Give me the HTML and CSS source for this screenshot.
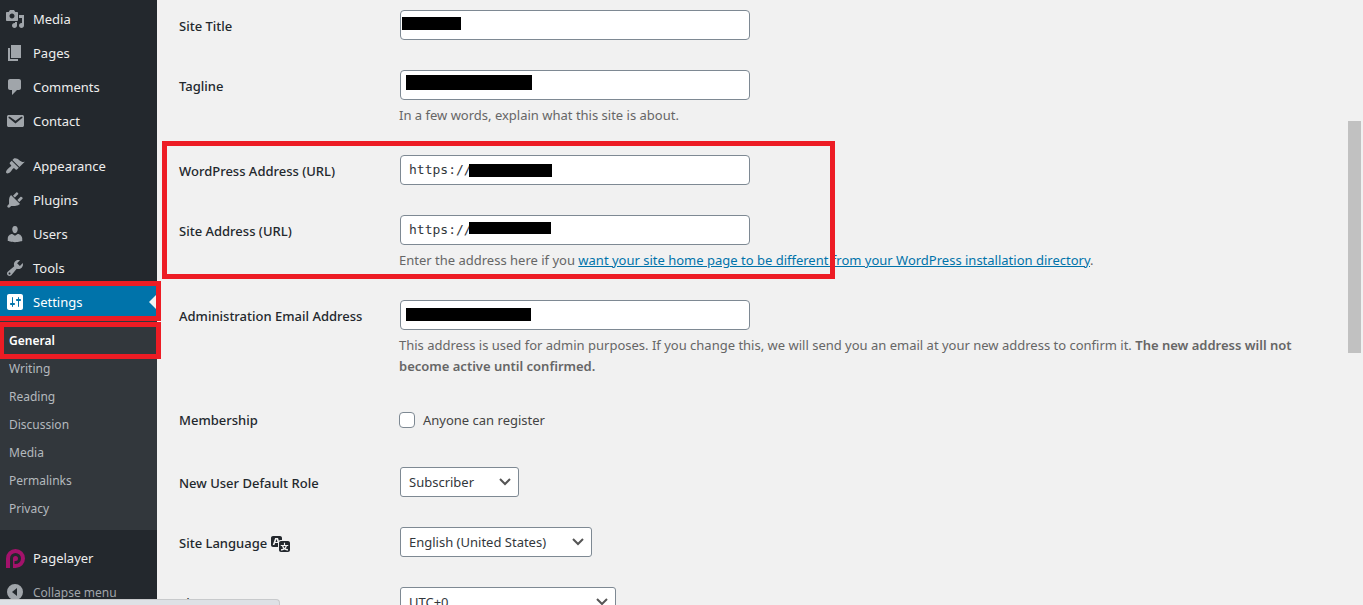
FILE: index.html
```html
<!DOCTYPE html>
<html lang="en">
<head>
    <meta charset="UTF-8">
    <meta name="viewport" content="width=device-width, initial-scale=1.0">
    <title>General Settings</title>
    <link rel="stylesheet" href="styles.css">
</head>
<body>
    <nav class="sidebar">
        <ul class="menu">
            <li><a href="#"><svg viewBox="0 0 20 20"><path d="M13 11V4c0-.55-.45-1-1-1h-1.67L9 1H5L3.67 3H2c-.55 0-1 .45-1 1v7c0 .55.45 1 1 1h10c.55 0 1-.45 1-1zM7 4.5c1.38 0 2.5 1.12 2.5 2.5S8.38 9.5 7 9.5 4.5 8.38 4.5 7 5.62 4.5 7 4.5zM14 6h5v10.5c0 1.38-1.12 2.5-2.5 2.5S14 17.88 14 16.5s1.12-2.5 2.5-2.5c.17 0 .34.02.5.05V9h-3V6zm-4 8.05V13h2v3.5c0 1.38-1.12 2.5-2.5 2.5S7 17.88 7 16.5 8.12 14 9.5 14c.17 0 .34.02.5.05z"/></svg>Media</a></li>
            <li><a href="#"><svg viewBox="0 0 20 20"><path d="M6 15V2h10v13H6zm-1 1h8v2H3V5h2v11z"/></svg>Pages</a></li>
            <li><a href="#"><svg viewBox="0 0 20 20"><path d="M5 2h9c1.1 0 2 .9 2 2v7c0 1.1-.9 2-2 2h-2l-5 5v-5H5c-1.1 0-2-.9-2-2V4c0-1.1.9-2 2-2z"/></svg>Comments</a></li>
            <li><a href="#"><svg viewBox="0 0 20 20"><path d="M3.87 4h13.25C18.37 4 19 4.59 19 5.79v8.42c0 1.19-.63 1.79-1.88 1.79H3.87c-1.25 0-1.88-.6-1.88-1.79V5.79c0-1.2.63-1.79 1.88-1.79zm6.62 8.6l6.74-5.53c.24-.2.43-.66.13-1.07-.29-.41-.82-.42-1.17-.17l-5.7 3.86L4.8 5.83c-.35-.25-.88-.24-1.17.17-.3.41-.11.87.13 1.07z"/></svg>Contact</a></li>
            <li class="separator"></li>
            <li><a href="#"><svg viewBox="0 0 20 20"><path d="M14.48 11.06L7.41 3.99l1.5-1.5c.5-.56 2.3-.47 3.51.32 1.21.8 1.43 1.28 2.91 2.1 1.18.64 2.45 1.26 4.45.85zm-.71.71L6.7 4.7 4.93 6.47c-.39.39-.39 1.02 0 1.41l1.06 1.06c.39.39.39 1.03 0 1.42-.6.6-1.43 1.11-2.21 1.69-.35.26-.7.53-1.01.84C1.43 14.23.4 16.08 1.4 17.07c.99 1 2.84-.03 4.18-1.36.31-.31.58-.66.85-1.02.57-.78 1.08-1.61 1.69-2.21.39-.39 1.02-.39 1.41 0l1.06 1.06c.39.39 1.02.39 1.41 0z"/></svg>Appearance</a></li>
            <li><a href="#"><svg viewBox="0 0 20 20"><path d="M13.11 4.36L9.87 7.6 8 5.73l3.24-3.24c.35-.34 1.05-.2 1.56.32.52.51.66 1.21.31 1.55zm-8 1.77l.91-1.12 9.01 9.01-1.19.84c-.71.71-2.63 1.16-3.82 1.16H6.14L4.9 17.26c-.59.59-1.54.59-2.12 0-.59-.58-.59-1.53 0-2.12l1.24-1.24v-3.88c0-1.13.4-3.19 1.09-3.89zm7.26 3.97l3.24-3.24c.34-.35 1.04-.21 1.55.31.52.51.66 1.21.31 1.55l-3.24 3.25z"/></svg>Plugins</a></li>
            <li><a href="#"><svg viewBox="0 0 20 20"><path d="M10 9.25c-2.27 0-2.73-3.44-2.73-3.44C7 4.02 7.82 2 9.97 2c2.16 0 2.98 2.02 2.71 3.81 0 0-.41 3.44-2.68 3.44zm0 2.57L12.72 10c2.39 0 4.52 2.33 4.52 4.53v2.49s-3.65 1.13-7.24 1.13c-3.65 0-7.24-1.13-7.24-1.13v-2.49c0-2.25 1.94-4.48 4.47-4.48z"/></svg>Users</a></li>
            <li><a href="#"><svg viewBox="0 0 20 20"><path d="M16.68 9.77c-1.34 1.34-3.3 1.67-4.95.99l-5.41 6.52c-.99.99-2.59.99-3.58 0s-.99-2.59 0-3.57l6.52-5.42c-.68-1.65-.35-3.61.99-4.95 1.28-1.28 3.12-1.62 4.72-1.06l-2.89 2.89 2.82 2.82 2.86-2.87c.53 1.58.18 3.39-1.08 4.65zM3.81 16.21c.4.39 1.04.39 1.43 0 .4-.4.4-1.04 0-1.43-.39-.4-1.03-.4-1.43 0-.39.39-.39 1.03 0 1.43z"/></svg>Tools</a></li>
            <li class="current">
                <a href="#"><svg viewBox="0 0 20 20"><path d="M18 16V4c0-1.1-.9-2-2-2H4c-1.1 0-2 .9-2 2v12c0 1.1.9 2 2 2h12c1.1 0 2-.9 2-2zM8 11h1c.55 0 1 .45 1 1s-.45 1-1 1H8v1.5c0 .28-.22.5-.5.5s-.5-.22-.5-.5V13H6c-.55 0-1-.45-1-1s.45-1 1-1h1V5.5c0-.28.22-.5.5-.5s.5.22.5.5V11zm5-2h-1c-.55 0-1-.45-1-1s.45-1 1-1h1V5.5c0-.28.22-.5.5-.5s.5.22.5.5V7h1c.55 0 1 .45 1 1s-.45 1-1 1h-1v5.5c0 .28-.22.5-.5.5s-.5-.22-.5-.5V9z"/></svg>Settings</a>
                <span class="mark mark-settings"></span>
            </li>
        </ul>
        <ul class="submenu">
            <li class="active"><a href="#">General</a><span class="mark mark-general"></span></li>
            <li><a href="#">Writing</a></li>
            <li><a href="#">Reading</a></li>
            <li><a href="#">Discussion</a></li>
            <li><a href="#">Media</a></li>
            <li><a href="#">Permalinks</a></li>
            <li><a href="#">Privacy</a></li>
        </ul>
        <ul class="menu menu-bottom">
            <li><a href="#"><svg class="pagelayer" viewBox="0 0 20 20"><path d="M1 20V10.500A9.500 9.500 0 1 1 10.500 20H8v-9.500a2.500 2.500 0 1 1 2.500 2.500H9.500v3H10.500A5.500 5.500 0 1 0 5 10.500V20z"/></svg>Pagelayer</a></li>
            <li><button type="button" class="collapse"><svg viewBox="0 0 20 20"><path fill-rule="evenodd" d="M10 2a8 8 0 1 1 0 16 8 8 0 0 1 0-16zm2 4l-5 4 5 4z"/></svg>Collapse menu</button></li>
        </ul>
    </nav>

    <main class="content">
        <form>
            <div class="row">
                <label for="blogname">Site Title</label>
                <div class="field">
                    <input type="text" id="blogname">
                    <span class="redacted redacted-title"></span>
                </div>
            </div>
            <div class="row">
                <label for="tagline">Tagline</label>
                <div class="field">
                    <input type="text" id="tagline">
                    <span class="redacted redacted-tagline"></span>
                    <p>In a few words, explain what this site is about.</p>
                </div>
            </div>

            <div class="group">
                <div class="row">
                    <label for="siteurl">WordPress Address (URL)</label>
                    <div class="field">
                        <input type="url" id="siteurl" value="https://">
                        <span class="redacted redacted-siteurl"></span>
                    </div>
                </div>
                <div class="row">
                    <label for="home">Site Address (URL)</label>
                    <div class="field">
                        <input type="url" id="home" value="https://">
                        <span class="redacted redacted-home"></span>
                        <p>Enter the address here if you <a href="#">want your site home page to be different from your WordPress installation directory</a>.</p>
                    </div>
                </div>
                <span class="mark mark-group"></span>
            </div>

            <div class="row">
                <label for="email">Administration Email Address</label>
                <div class="field">
                    <input type="email" id="email">
                    <span class="redacted redacted-email"></span>
                    <p>This address is used for admin purposes. If you change this, we will send you an email at your new address to confirm it. <strong>The new address will not become active until confirmed.</strong></p>
                </div>
            </div>
            <div class="row row-check">
                <span class="title">Membership</span>
                <div class="field">
                    <label class="check" for="register"><input type="checkbox" id="register">Anyone can register</label>
                </div>
            </div>
            <div class="row">
                <label for="role">New User Default Role</label>
                <div class="field">
                    <div class="select select-role">
                        <select id="role"><option>Subscriber</option></select>
                        <svg viewBox="0 0 20 20"><path d="M5 7l5 5 5-5"/></svg>
                    </div>
                </div>
            </div>
            <div class="row">
                <label for="language">Site Language
                    <svg class="translate" viewBox="0 0 20 20"><path d="M11 7H9.490c-.63 0-1.250.3-1.590.7L7 5H4.130l-2.390 7h1.690l.74-2H7v4H2c-1.100 0-2-.9-2-2V5c0-1.100.9-2 2-2h7c1.100 0 2 .9 2 2v2zM6.510 9H4.490l1-2.930zM10 8h7c1.100 0 2 .9 2 2v7c0 1.100-.9 2-2 2h-7c-1.100 0-2-.9-2-2v-7c0-1.100.9-2 2-2zm7.250 5v-1.080h-3.170V9.750h-1.160v2.170H9.750V13h1.280c.11.850.56 1.850 1.280 2.620-.87.360-1.890.62-2.310.62-.01.020.22.970.2 1.460.84 0 2.210-.5 3.280-1.150 1.090.65 2.480 1.150 3.340 1.150-.02-.49.2-1.440.2-1.460-.43 0-1.490-.27-2.380-.63.7-.77 1.140-1.770 1.250-2.610h1.360zm-3.810 1.930c-.5-.46-.85-1.130-1.010-1.930h2.090c-.17.8-.51 1.470-1 1.930l-.04.03s-.03-.02-.04-.03z"/></svg>
                </label>
                <div class="field">
                    <div class="select select-language">
                        <select id="language"><option>English (United States)</option></select>
                        <svg viewBox="0 0 20 20"><path d="M5 7l5 5 5-5"/></svg>
                    </div>
                </div>
            </div>
            <div class="row">
                <label for="timezone">Timezone</label>
                <div class="field">
                    <div class="select select-timezone">
                        <select id="timezone"><option>UTC+0</option></select>
                        <svg viewBox="0 0 20 20"><path d="M5 7l5 5 5-5"/></svg>
                    </div>
                </div>
            </div>
        </form>
    </main>

    <div class="scrollbar"><div class="thumb"></div></div>
    <div class="statusbar"></div>
</body>
</html>
```

FILE: styles.css
```css
* {
    box-sizing: border-box;
}

body {
    display: flex;
    height: 100vh;
    margin: 0;
    overflow: hidden;
    background-color: #f1f1f1;
    color: #444;
    font-family: "Noto Sans", "Open Sans", sans-serif;
    font-size: 13px;
}

ul {
    list-style: none;
    margin: 0;
    padding: 0;
}

/* Sidebar */
.sidebar {
    flex: none;
    width: 157px;
    background-color: #23282d;
}

.menu {
    padding-top: 2px;
}

.menu-bottom {
    padding-top: 11px;
}

.menu li {
    position: relative;
}

.menu a,
.collapse {
    display: flex;
    align-items: center;
    gap: 8px;
    width: 100%;
    height: 34px;
    padding: 0 5px;
    color: #eee;
    text-decoration: none;
    white-space: nowrap;
}

.menu svg {
    flex: none;
    width: 20px;
    height: 20px;
    fill: #a0a5aa;
}

.menu svg.pagelayer {
    fill: #a3126b;
}

.menu .separator {
    height: 11px;
}

.menu .current a {
    background-color: #0073aa;
    color: #fff;
}

.menu .current svg {
    fill: #fff;
}

.menu .current a::after {
    content: "";
    position: absolute;
    top: 9px;
    right: 0;
    border: 8px solid transparent;
    border-right-color: #f1f1f1;
    border-left-width: 0;
}

.collapse {
    border: none;
    background: none;
    color: #a0a5aa;
    font-family: inherit;
    font-size: 12px;
    cursor: pointer;
}

.submenu {
    padding: 8px 0 7px;
    background-color: #32373c;
}

.submenu li {
    position: relative;
}

.submenu a {
    display: block;
    padding-left: 9px;
    color: #b4b9be;
    font-size: 12px;
    line-height: 28px;
    text-decoration: none;
}

.submenu .active a {
    color: #fff;
    font-weight: 600;
}

/* Red highlight boxes */
.mark {
    position: absolute;
    z-index: 2;
    border: 5px solid #ed1c24;
    pointer-events: none;
}

.mark-settings {
    top: -4px;
    left: 0;
    width: 161px;
    height: 40px;
    border-left: none;
}

.mark-general {
    top: -5px;
    left: 0;
    width: 161px;
    height: 37px;
    border-left-width: 4px;
}

.mark-group {
    top: 1px;
    left: -17px;
    width: 673px;
    height: 138px;
}

/* Settings form */
.content {
    flex: 1;
    min-width: 0;
    padding: 0 30px 0 22px;
}

.group {
    position: relative;
}

.row {
    display: grid;
    grid-template-columns: 220px 1fr;
    padding: 15px 0;
}

.row:first-child {
    padding-top: 10px;
}

.group .row:first-child {
    padding-top: 15px;
}

.row > label,
.title {
    padding-top: 6px;
    color: #23282d;
    font-weight: 500;
    line-height: 20px;
}

.translate {
    width: 20px;
    height: 20px;
    vertical-align: top;
    fill: #23282d;
}

.field {
    position: relative;
}

.field p {
    margin: 5px 0 -1px;
    color: #666;
    line-height: 21px;
}

.field strong {
    font-weight: 600;
}

.field p a {
    color: #0073aa;
}

input[type="text"],
input[type="url"],
input[type="email"],
select {
    display: block;
    height: 30px;
    border: 1px solid #7e8993;
    border-radius: 4px;
    background-color: #fff;
    color: #32373c;
}

input[type="text"],
input[type="url"],
input[type="email"] {
    width: 350px;
    max-width: 100%;
    margin: 0 1px;
    padding: 0 8px 2px;
    font-family: "DejaVu Sans Mono", monospace;
    font-size: 13px;
}

.redacted {
    position: absolute;
    height: 13px;
    background-color: #000;
}

.redacted-title {
    top: 7px;
    left: 3px;
    width: 59px;
}

.redacted-tagline {
    top: 5px;
    left: 7px;
    width: 126px;
    height: 15px;
}

.redacted-siteurl {
    top: 9px;
    left: 70px;
    width: 83px;
}

.redacted-home {
    top: 7px;
    left: 70px;
    width: 82px;
    height: 12px;
}

.redacted-email {
    top: 8px;
    left: 7px;
    width: 125px;
}

.row-check {
    padding: 13px 0;
}

.check {
    display: flex;
    align-items: center;
    gap: 8px;
    height: 32px;
    margin-bottom: 3px;
}

input[type="checkbox"] {
    appearance: none;
    width: 16px;
    height: 16px;
    margin: 0;
    border: 1px solid #7e8993;
    border-radius: 4px;
    background-color: #fff;
}

.select {
    position: relative;
    margin: 0 1px;
}

.select-role {
    width: 119px;
}

.select-language {
    width: 192px;
}

.select-timezone {
    width: 216px;
}

select {
    appearance: none;
    width: 100%;
    padding: 0 24px 0 8px;
    border-radius: 3px;
    font-family: inherit;
    font-size: 13px;
}

.select svg {
    position: absolute;
    top: 5px;
    right: 4px;
    width: 20px;
    height: 20px;
    fill: none;
    stroke: #555;
    stroke-width: 2;
    pointer-events: none;
}

/* Browser chrome */
.scrollbar {
    flex: none;
    width: 17px;
    padding: 121px 2px 0;
}

.thumb {
    height: 232px;
    background-color: #c1c1c1;
}

.statusbar {
    position: fixed;
    bottom: 0;
    left: 0;
    z-index: 3;
    width: 280px;
    height: 6px;
    border-top: 1px solid #c8cacc;
    border-right: 1px solid #c8cacc;
    border-top-right-radius: 4px;
    background-color: #dee1e6;
}
```
